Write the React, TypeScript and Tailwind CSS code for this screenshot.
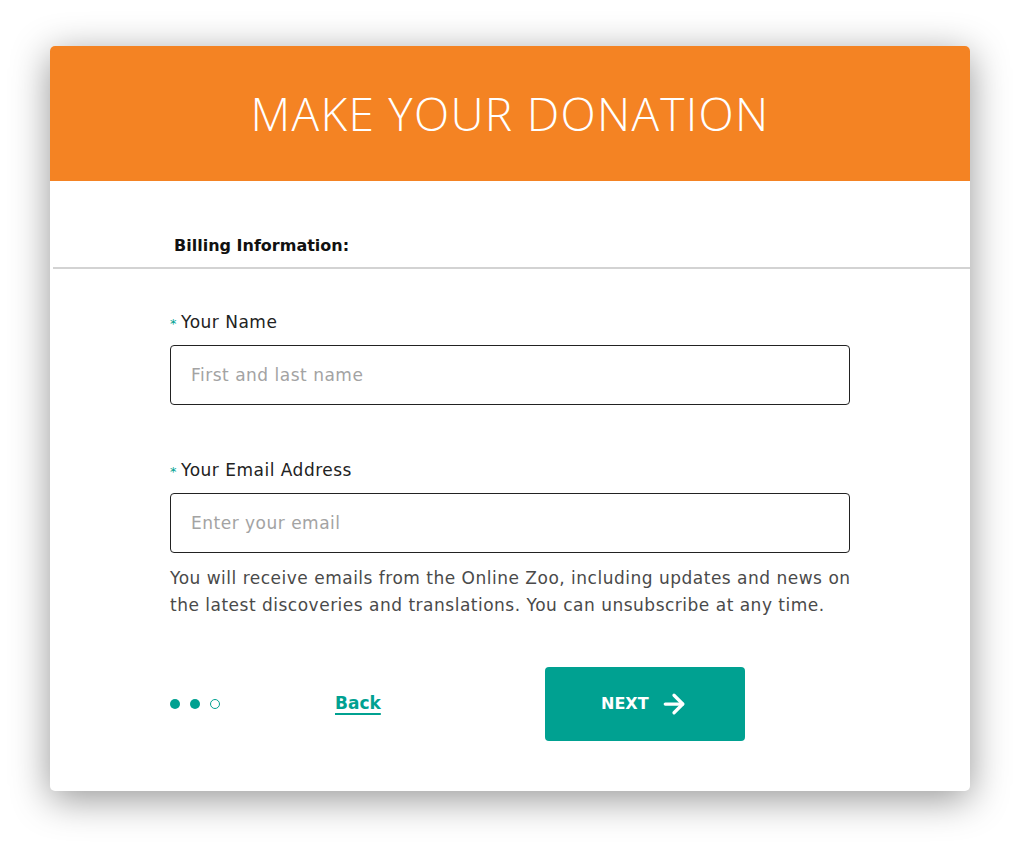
import { ArrowRight } from "lucide-react";

const font = { fontFamily: '"DejaVu Sans", "Open Sans", sans-serif' };

function Field({ label, placeholder, type }: { label: string; placeholder: string; type: string }) {
  return (
    <div>
      <label className="flex items-baseline text-[17px] leading-[24px] tracking-[0.5px] text-[#222]">
        <span className="mr-[4px] text-[13px] text-[#00a191]">*</span>
        {label}
      </label>
      <input
        type={type}
        placeholder={placeholder}
        className="mt-[9px] block h-[60px] w-[680px] rounded-[4px] border border-[#222] bg-white px-[20px] text-[17px] tracking-[0.5px] text-[#222] outline-none placeholder:text-[#a3a3a3]"
      />
    </div>
  );
}

export default function App() {
  return (
    <div className="min-h-screen bg-white pl-[50px] pt-[46px]" style={font}>
      <div className="w-[920px] h-[745px] overflow-hidden rounded-[5px] bg-white shadow-[0_8px_38px_rgba(0,0,0,0.42)]">
        <header className="flex h-[135px] items-center justify-center bg-[#f48323]">
          <h1
            className="text-[46px] font-light tracking-[1.3px] text-white"
            style={{ fontFamily: '"Open Sans", sans-serif' }}
          >
            MAKE YOUR DONATION
          </h1>
        </header>

        <div className="pl-[124px] pt-[53px] text-[16px] font-bold leading-[24px] text-[#111]">
          Billing Information:
        </div>
        <div className="ml-[3px] mt-[9px] h-[2px] bg-[#d3d3d3]" />

        <div className="pl-[120px] pt-[41px]">
          <Field label="Your Name" placeholder="First and last name" type="text" />
          <div className="h-[53px]" />
          <Field label="Your Email Address" placeholder="Enter your email" type="email" />
          <p className="mt-[12px] w-[700px] text-[17px] leading-[27px] tracking-[0.5px] text-[#4a4a4a]">
            You will receive emails from the Online Zoo, including updates and news on
            <br />
            the latest discoveries and translations. You can unsubscribe at any time.
          </p>

          <div className="mt-[48px] flex items-center">
            <div className="flex items-center gap-[10px]">
              <span className="h-[10px] w-[10px] rounded-full bg-[#00a191]" />
              <span className="h-[10px] w-[10px] rounded-full bg-[#00a191]" />
              <span className="h-[10px] w-[10px] rounded-full border border-[#00a191]" />
            </div>
            <a
              href="#"
              className="ml-[115px] text-[17px] font-semibold text-[#00a191] underline decoration-[1.5px] underline-offset-[4px]"
            >
              Back
            </a>
            <button className="ml-[164px] flex h-[74px] w-[200px] items-center justify-center gap-[10px] rounded-[4px] bg-[#00a191] text-[16px] font-bold text-white">
              NEXT
              <ArrowRight size={30} strokeWidth={2.6} />
            </button>
          </div>
        </div>
      </div>
    </div>
  );
}
